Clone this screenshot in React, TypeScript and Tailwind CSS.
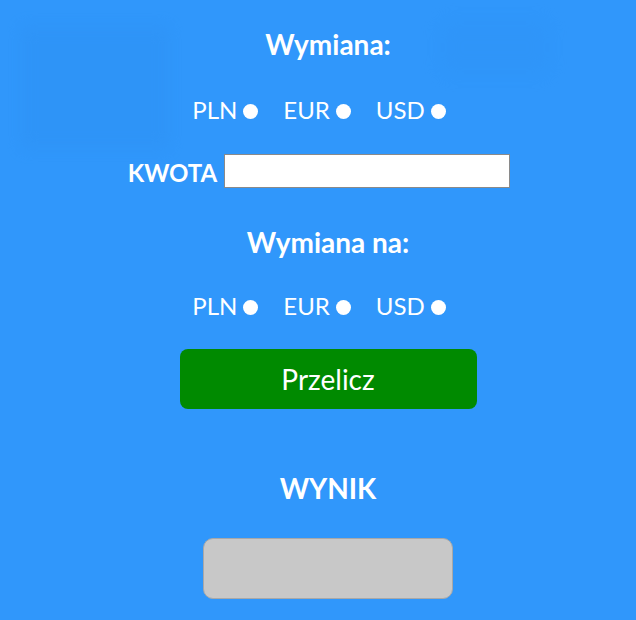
import React, { useState } from "react";

const currencies = ["PLN", "EUR", "USD"];

function CurrencyRow({ name, value, onChange }: { name: string; value: string; onChange: (v: string) => void }) {
  return (
    <div className="flex items-center gap-[25px] text-[24px] leading-[29px]">
      {currencies.map((c) => (
        <label key={c} className="flex items-center cursor-pointer">
          <span>{c}</span>
          <input
            type="radio"
            name={name}
            checked={value === c}
            onChange={() => onChange(c)}
            className="sr-only"
          />
          <span className="ml-[6px] mt-[3px] w-[15px] h-[15px] rounded-full bg-white" />
        </label>
      ))}
    </div>
  );
}

export default function App() {
  const [from, setFrom] = useState("");
  const [to, setTo] = useState("");
  const [amount, setAmount] = useState("");

  return (
    <main
      className="relative min-h-screen w-full overflow-hidden bg-[#3097fb] text-white flex flex-col items-center"
      style={{ fontFamily: "Lato, 'Open Sans', sans-serif" }}
    >
      {/* faint background blotches */}
      <div className="absolute left-[20px] top-[25px] w-[150px] h-[125px] bg-[#2c8eef] opacity-30 blur-[8px]" />
      <div className="absolute left-[440px] top-[20px] w-[110px] h-[55px] bg-[#2c8eef] opacity-20 blur-[10px]" />

      <h2 className="relative mt-[27px] ml-[20px] text-[28px] leading-[34px] font-bold">Wymiana:</h2>

      <div className="relative mt-[34px] ml-[2px]">
        <CurrencyRow name="from" value={from} onChange={setFrom} />
      </div>

      <div className="relative mt-[30px] ml-[2px] flex items-center gap-[7px]">
        <span className="text-[24px] leading-[29px] font-bold mt-[3px]">KWOTA</span>
        <input
          type="text"
          value={amount}
          onChange={(e) => setAmount(e.target.value)}
          className="w-[286px] h-[34px] bg-white border border-[#8a8a8a] text-black px-1 outline-none"
        />
      </div>

      <h2 className="relative mt-[37px] ml-[20px] text-[28px] leading-[34px] font-bold">Wymiana na:</h2>

      <div className="relative mt-[32px] ml-[2px]">
        <CurrencyRow name="to" value={to} onChange={setTo} />
      </div>

      <button className="relative mt-[29px] ml-[20px] w-[297px] h-[60px] rounded-[8px] bg-[#008a00] text-[28px] leading-[34px] text-white">
        Przelicz
      </button>

      <h2 className="relative mt-[62px] ml-[20px] text-[28px] leading-[34px] font-bold">WYNIK</h2>

      <div className="relative mt-[33px] ml-[20px] w-[250px] h-[61px] rounded-[10px] bg-[#c8c8c8] border border-[#a8a8a8]" />
    </main>
  );
}
